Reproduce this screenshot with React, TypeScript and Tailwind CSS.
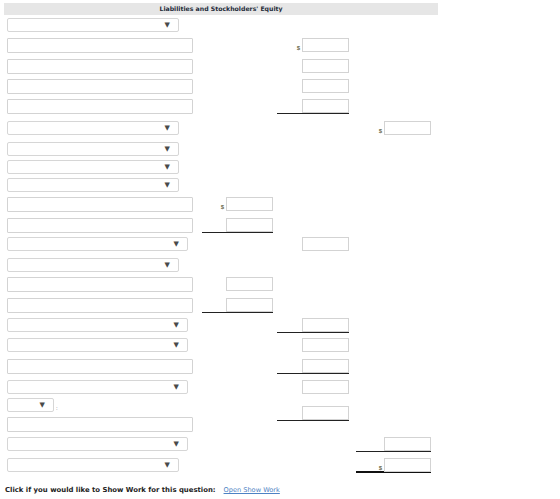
type LabelKind = "select" | "wide" | "text" | "small";

interface RowSpec {
  mt: string;
  label: LabelKind;
  col?: 1 | 2 | 3;
  dollar?: boolean;
  line?: "single" | "double";
}

const rows: RowSpec[] = [
  { mt: "mt-[3px]", label: "select" },
  { mt: "mt-[5px]", label: "text", col: 2, dollar: true },
  { mt: "mt-[6px]", label: "text", col: 2 },
  { mt: "mt-[5px]", label: "text", col: 2 },
  { mt: "mt-[5px]", label: "text", col: 2, line: "single" },
  { mt: "mt-[7px]", label: "select", col: 3, dollar: true },
  { mt: "mt-[6px]", label: "select" },
  { mt: "mt-[3px]", label: "select" },
  { mt: "mt-[3px]", label: "select" },
  { mt: "mt-[4px]", label: "text", col: 1, dollar: true },
  { mt: "mt-[6px]", label: "text", col: 1, line: "single" },
  { mt: "mt-[4px]", label: "wide", col: 2 },
  { mt: "mt-[6px]", label: "select" },
  { mt: "mt-[4px]", label: "text", col: 1 },
  { mt: "mt-[6px]", label: "text", col: 1, line: "single" },
  { mt: "mt-[5px]", label: "wide", col: 2, line: "single" },
  { mt: "mt-[5px]", label: "wide", col: 2 },
  { mt: "mt-[6px]", label: "text", col: 2, line: "single" },
  { mt: "mt-[6px]", label: "wide", col: 2 },
];

const tail: RowSpec[] = [
  { mt: "mt-[6px]", label: "wide", col: 3, line: "single" },
  { mt: "mt-[6px]", label: "select", col: 3, dollar: true, line: "double" },
];

const Arrow = () => (
  <span className="text-[7px] leading-none text-[#4a4a4a] font-['DejaVu_Sans',sans-serif]">▼</span>
);

const Dropdown = ({ width }: { width: string }) => (
  <div
    className={`${width} h-[14px] bg-white border border-[#d6d6d6] rounded-[2px] flex items-center justify-end pr-[8px]`}
  >
    <Arrow />
  </div>
);

const TextBox = () => <div className="w-[186px] h-[15px] bg-white border border-[#d3d3d3] rounded-[1px]" />;

const Label = ({ kind }: { kind: LabelKind }) => {
  if (kind === "text") return <TextBox />;
  if (kind === "wide") return <Dropdown width="w-[181px]" />;
  if (kind === "small") return <Dropdown width="w-[47px]" />;
  return <Dropdown width="w-[172px]" />;
};

const Amount = ({ dollar, line, width }: { dollar?: boolean; line?: "single" | "double"; width: string }) => {
  const border =
    line === "double" ? "border-b-2 border-[#111]" : line === "single" ? "border-b border-[#222]" : "";
  return (
    <div className={`${width} h-[15px] flex items-start justify-end ${border}`}>
      {dollar && <span className="text-[6px] leading-none text-[#6b6b4a] mt-[7px] mr-[2px] font-bold">$</span>}
      <div className="w-[47px] h-[14px] shrink-0 bg-white border border-[#d3d3d3]" />
    </div>
  );
};

const Columns = ({ row }: { row: RowSpec }) => (
  <>
    <div className="w-[71px]">{row.col === 1 && <Amount dollar={row.dollar} line={row.line} width="w-[71px]" />}</div>
    <div className="w-[72px] ml-[4px]">
      {row.col === 2 && <Amount dollar={row.dollar} line={row.line} width="w-[72px]" />}
    </div>
    <div className="w-[75px] ml-[7px]">
      {row.col === 3 && <Amount dollar={row.dollar} line={row.line} width="w-[75px]" />}
    </div>
  </>
);

const Row = ({ row }: { row: RowSpec }) => (
  <div className={`flex items-start h-[15px] ${row.mt}`}>
    <div className="w-[202px] pl-[7px]">
      <Label kind={row.label} />
    </div>
    <Columns row={row} />
  </div>
);

export default function App() {
  return (
    <div className="w-[560px] h-[499px] bg-white font-['Liberation_Sans',Arial,sans-serif] pt-[3px] overflow-hidden">
      <div className="ml-[4px] w-[434px] h-[12px] bg-[#e6e6e6] flex items-center justify-center">
        <span className="text-[6.2px] font-bold text-[#1e2b3a] leading-none font-['DejaVu_Sans',sans-serif]">
          Liabilities and Stockholders' Equity
        </span>
      </div>

      {rows.map((row, i) => (
        <Row key={i} row={row} />
      ))}

      {/* sub-total row: short dropdown with a text field underneath */}
      <div className="flex items-start h-[33px] mt-[3px]">
        <div className="w-[202px] pl-[7px]">
          <div className="flex items-end">
            <Label kind="small" />
            <span className="text-[6px] leading-none text-[#555] ml-[2px] mb-[1px]">:</span>
          </div>
          <div className="mt-[5px]">
            <TextBox />
          </div>
        </div>
        <div className="w-[71px]" />
        <div className="w-[72px] ml-[4px] mt-[8px]">
          <Amount line="single" width="w-[72px]" />
        </div>
      </div>

      {tail.map((row, i) => (
        <Row key={i} row={row} />
      ))}

      <div className="mt-[14px] ml-[5px] flex items-center text-[6.9px] leading-none font-['DejaVu_Sans',sans-serif]">
        <span className="font-bold text-[#222]">Click if you would like to Show Work for this question:</span>
        <a href="#" className="ml-[8px] text-[6.6px] text-[#4d82c4] underline">
          Open Show Work
        </a>
      </div>
    </div>
  );
}
